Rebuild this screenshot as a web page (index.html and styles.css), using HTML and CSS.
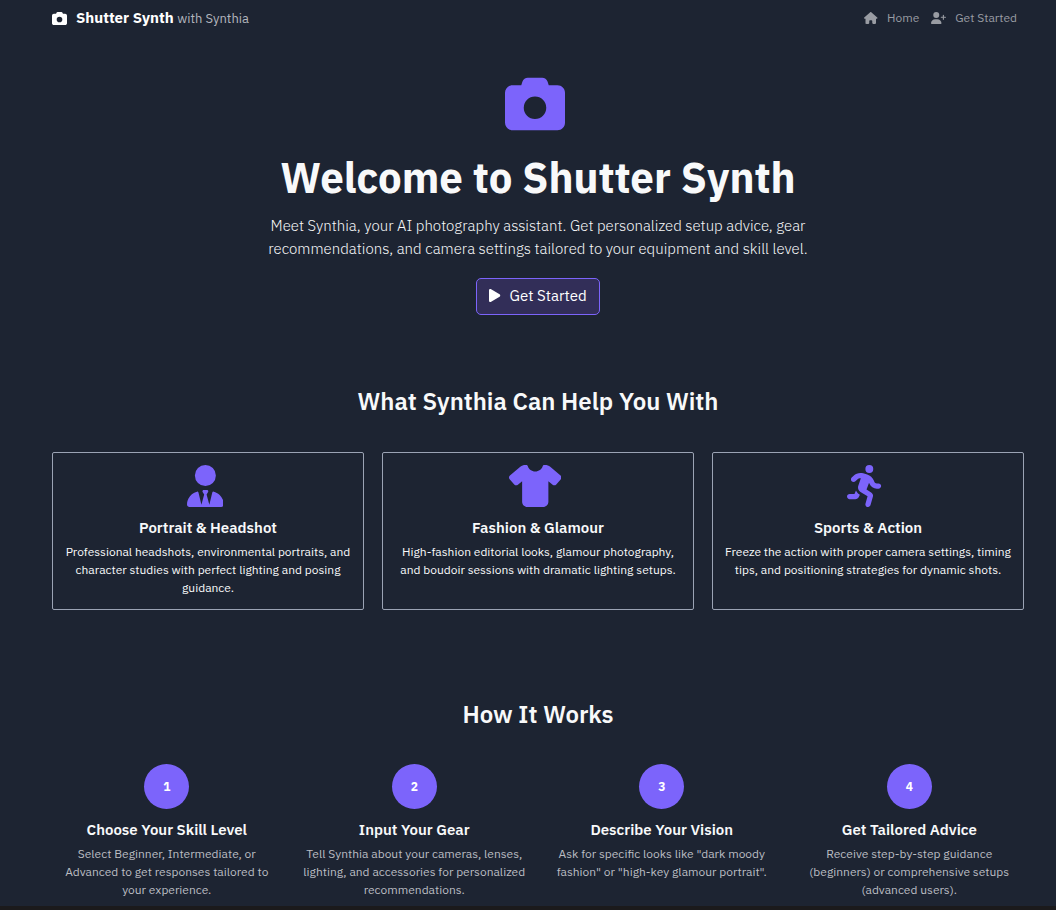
FILE: index.html
```html
<!DOCTYPE html>
<html lang="en">
<head>
<meta charset="utf-8">
<meta name="viewport" content="width=device-width, initial-scale=1">
<title>Shutter Synth</title>
<link rel="stylesheet" href="styles.css">
</head>
<body>
<div class="page">
  <header class="navbar">
    <a class="brand" href="#">
      <svg class="icon" viewBox="0 0 512 512" aria-hidden="true"><path d="M149.1 64.8L138.7 96H64C28.7 96 0 124.7 0 160V416c0 35.3 28.7 64 64 64H448c35.3 0 64-28.7 64-64V160c0-35.3-28.7-64-64-64H373.3L362.9 64.8C356.4 45.2 338.1 32 317.4 32H194.6c-20.7 0-39 13.2-45.5 32.8zM256 192a96 96 0 1 1 0 192 96 96 0 1 1 0-192z"/></svg>
      <span><strong>Shutter Synth</strong> <span class="tagline">with Synthia</span></span>
    </a>
    <nav class="nav-links">
      <a class="nav-link" href="#">
        <svg class="icon" viewBox="0 0 576 512" aria-hidden="true"><path d="M575.8 255.5c0 18-15 32.1-32 32.1h-32l.7 160.2c0 2.7-.2 5.4-.5 8.1V472c0 22.1-17.9 40-40 40H456c-1.1 0-2.2 0-3.3-.1c-1.4 .1-2.8 .1-4.2 .1H416 392c-22.1 0-40-17.9-40-40V448 384c0-17.7-14.3-32-32-32H256c-17.7 0-32 14.3-32 32v64 24c0 22.1-17.9 40-40 40H160 128.1c-1.5 0-3-.1-4.5-.2c-1.2 .1-2.4 .2-3.6 .2H104c-22.1 0-40-17.9-40-40V360c0-.9 0-1.9 .1-2.8V287.6H32c-18 0-32-14-32-32.1c0-9 3-17 10-24L266.4 8c7-7 15-8 22-8s15 2 21 7L564.8 231.5c8 7 12 15 11 24z"/></svg>
        Home
      </a>
      <a class="nav-link" href="#">
        <svg class="icon" viewBox="0 0 640 512" aria-hidden="true"><path d="M96 128a128 128 0 1 1 256 0A128 128 0 1 1 96 128zM0 482.3C0 383.8 79.8 304 178.3 304h91.4C368.2 304 448 383.8 448 482.3c0 16.4-13.3 29.7-29.7 29.7H29.7C13.3 512 0 498.7 0 482.3zM504 312V248H440c-13.3 0-24-10.7-24-24s10.7-24 24-24h64V136c0-13.3 10.7-24 24-24s24 10.7 24 24v64h64c13.3 0 24 10.7 24 24s-10.7 24-24 24H552v64c0 13.3-10.7 24-24 24s-24-10.7-24-24z"/></svg>
        Get Started
      </a>
    </nav>
  </header>

  <main>
    <section class="hero">
      <svg class="icon hero-icon" viewBox="0 0 512 512" aria-hidden="true"><path d="M149.1 64.8L138.7 96H64C28.7 96 0 124.7 0 160V416c0 35.3 28.7 64 64 64H448c35.3 0 64-28.7 64-64V160c0-35.3-28.7-64-64-64H373.3L362.9 64.8C356.4 45.2 338.1 32 317.4 32H194.6c-20.7 0-39 13.2-45.5 32.8zM256 192a96 96 0 1 1 0 192 96 96 0 1 1 0-192z"/></svg>
      <h1>Welcome to Shutter Synth</h1>
      <p class="lead">Meet Synthia, your AI photography assistant. Get personalized setup advice, gear recommendations, and camera settings tailored to your equipment and skill level.</p>
      <button class="cta" type="button">
        <svg class="icon" viewBox="0 0 384 512" aria-hidden="true"><path d="M73 39c-14.8-9.1-33.4-9.4-48.5-.9S0 62.6 0 80V432c0 17.4 9.4 33.4 24.5 41.9s33.7 8.1 48.5-.9L361 297c14.3-8.7 23-24.2 23-41s-8.7-32.2-23-41L73 39z"/></svg>
        Get Started
      </button>
    </section>

    <section class="features">
      <h2>What Synthia Can Help You With</h2>
      <div class="cards">
        <article class="card">
          <svg class="icon card-icon" viewBox="0 0 448 512" aria-hidden="true"><path d="M224 256A128 128 0 1 1 224 0a128 128 0 1 1 0 256zM209.1 359.2l-18.6-31c-6.4-10.7 1.3-24.2 13.7-24.2H224h19.7c12.4 0 20.1 13.6 13.7 24.2l-18.6 31 33.4 123.9 36-146.9c2-8.1 9.8-13.4 17.9-11.3c70.1 17.6 121.9 81 121.9 156.4c0 17-13.8 30.7-30.7 30.7H285.5c-2.1 0-4-.4-5.8-1.1l.3 1.1H168l.3-1.1c-1.8 .7-3.8 1.1-5.8 1.1H30.7C13.8 512 0 498.2 0 481.3c0-75.5 51.9-138.9 121.9-156.4c8.1-2 15.9 3.3 17.9 11.3l36 146.9 33.4-123.9z"/></svg>
          <h3>Portrait &amp; Headshot</h3>
          <p>Professional headshots, environmental portraits, and character studies with perfect lighting and posing guidance.</p>
        </article>
        <article class="card">
          <svg class="icon card-icon" viewBox="0 0 640 512" aria-hidden="true"><path d="M211.8 0c7.8 0 14.3 5.7 16.7 13.2C240.8 51.9 277.1 80 320 80s79.2-28.1 91.5-66.8C413.9 5.7 420.4 0 428.2 0h12.6c22.5 0 44.2 7.9 61.5 22.3L628.5 127.4c6.6 5.5 10.7 13.5 11.4 22.1s-2.1 17.1-7.8 23.6l-56 64c-11.4 13.1-31.2 14.6-44.6 3.5L480 197.7V448c0 35.3-28.7 64-64 64H224c-35.3 0-64-28.7-64-64V197.7l-51.5 42.9c-13.3 11.1-33.1 9.6-44.6-3.5l-56-64c-5.7-6.5-8.5-15-7.8-23.6s4.8-16.6 11.4-22.1L137.7 22.3C155 7.9 176.7 0 199.2 0h12.6z"/></svg>
          <h3>Fashion &amp; Glamour</h3>
          <p>High-fashion editorial looks, glamour photography, and boudoir sessions with dramatic lighting setups.</p>
        </article>
        <article class="card">
          <svg class="icon card-icon" viewBox="0 0 448 512" aria-hidden="true"><path d="M320 48a48 48 0 1 0 -96 0 48 48 0 1 0 96 0zM125.7 175.5c9.9-9.9 23.4-15.5 37.5-15.5c1.9 0 3.8 .1 5.6 .3L137.6 254c-9.3 28 1.7 58.8 26.8 74.5l86.2 53.9-25.4 88.8c-4.9 17 5 34.7 22 39.6s34.7-5 39.6-22l28.7-100.4c5.9-20.6-2.6-42.6-20.7-53.9L238 299l30.9-82.4 5.1 12.3C289 264.7 323.9 288 362.7 288H384c17.7 0 32-14.3 32-32s-14.3-32-32-32H362.7c-12.9 0-24.6-7.8-29.5-19.7l-6.3-15c-14.6-35.1-44.1-61.9-80.5-73.1l-48.7-15c-11.1-3.4-22.7-5.2-34.4-5.2c-31 0-60.8 12.3-82.7 34.3L57.4 153.4c-12.5 12.5-12.5 32.8 0 45.3s32.8 12.5 45.3 0l23.1-23.1zM91.2 352H32c-17.7 0-32 14.3-32 32s14.3 32 32 32h69.6c19 0 36.2-11.2 43.9-28.5L157 361.6l-9.5-6c-17.5-10.9-30.5-26.8-37.9-44.9L91.2 352z"/></svg>
          <h3>Sports &amp; Action</h3>
          <p>Freeze the action with proper camera settings, timing tips, and positioning strategies for dynamic shots.</p>
        </article>
      </div>
    </section>

    <section class="how">
      <h2>How It Works</h2>
      <div class="steps">
        <article class="step">
          <div class="number">1</div>
          <h3>Choose Your Skill Level</h3>
          <p>Select Beginner, Intermediate, or Advanced to get responses tailored to your experience.</p>
        </article>
        <article class="step">
          <div class="number">2</div>
          <h3>Input Your Gear</h3>
          <p>Tell Synthia about your cameras, lenses, lighting, and accessories for personalized recommendations.</p>
        </article>
        <article class="step">
          <div class="number">3</div>
          <h3>Describe Your Vision</h3>
          <p>Ask for specific looks like "dark moody fashion" or "high-key glamour portrait".</p>
        </article>
        <article class="step">
          <div class="number">4</div>
          <h3>Get Tailored Advice</h3>
          <p>Receive step-by-step guidance (beginners) or comprehensive setups (advanced users).</p>
        </article>
      </div>
    </section>
  </main>
</div>
</body>
</html>
```
FILE: styles.css
```css
* { box-sizing: border-box; }

body {
  margin: 0;
  background: #1b1a1c;
  color: #f8f9fa;
  font-family: "IBM Plex Sans", Roboto, "Liberation Sans", sans-serif;
  font-size: 12px;
  line-height: 18px;
}

h1, h2, h3, p { margin: 0; }
a { color: inherit; text-decoration: none; }

.page {
  background: #1d2432;
  padding: 0 32px 7px 52px;
  margin-bottom: 4px;
}

.icon {
  height: 1em;
  fill: currentColor;
  margin-right: 6px;
  flex: none;
}

.navbar {
  display: flex;
  flex-wrap: wrap;
  justify-content: space-between;
  align-items: center;
  min-height: 36px;
}

.brand {
  display: flex;
  align-items: center;
  gap: 3px;
  font-size: 15px;
  color: #fff;
}

.brand strong { font-weight: 700; }

.tagline {
  font-size: 13px;
  color: #b3b6bd;
}

.nav-links {
  display: flex;
  gap: 12px;
  padding-right: 7px;
}

.nav-link {
  display: flex;
  align-items: center;
  gap: 3px;
  color: #999ca3;
}

.hero {
  display: flex;
  flex-direction: column;
  align-items: center;
  padding-top: 38px;
  text-align: center;
}

.hero-icon {
  height: 60px;
  color: #7c64fb;
}

h1 {
  margin-top: 19px;
  font-size: 42px;
  line-height: 50px;
  font-weight: 700;
}

.lead {
  max-width: 560px;
  margin-top: 11px;
  font-size: 15px;
  line-height: 23px;
  font-weight: 300;
}

.cta {
  display: flex;
  align-items: center;
  gap: 3px;
  margin-top: 18px;
  padding: 5px 12px 7px;
  border: 1px solid #7c64fb;
  border-radius: 5px;
  background: #322e58;
  color: #fff;
  font: 400 15px/23px "IBM Plex Sans", Roboto, "Liberation Sans", sans-serif;
}

h2 {
  font-size: 24px;
  line-height: 30px;
  font-weight: 600;
  text-align: center;
}

.features { padding-top: 71px; }

.cards {
  display: grid;
  grid-template-columns: repeat(3, 1fr);
  gap: 18px;
  margin-top: 36px;
}

.card {
  display: flex;
  flex-direction: column;
  align-items: center;
  padding: 12px;
  border: 1px solid #9ba3b4;
  border-radius: 2px;
  text-align: center;
}

.card-icon {
  height: 42px;
  color: #7c64fb;
}

h3 {
  font-size: 15px;
  line-height: 18px;
  font-weight: 600;
}

.card h3 { margin: 12px 0 6px; }

.how { padding-top: 89px; }

.steps {
  display: grid;
  grid-template-columns: repeat(4, 1fr);
  gap: 18px;
  margin-top: 35px;
}

.step {
  display: flex;
  flex-direction: column;
  align-items: center;
  text-align: center;
}

.number {
  display: flex;
  align-items: center;
  justify-content: center;
  width: 45px;
  height: 45px;
  border-radius: 50%;
  background: #7c64fb;
  color: #fff;
  font-weight: 700;
}

.step h3 { margin: 12px 0 6px; }
.step p { color: #bbbdc2; }

@media (max-width: 800px) {
  .cards { grid-template-columns: 1fr; }
  .steps { grid-template-columns: repeat(2, 1fr); }
}
```
